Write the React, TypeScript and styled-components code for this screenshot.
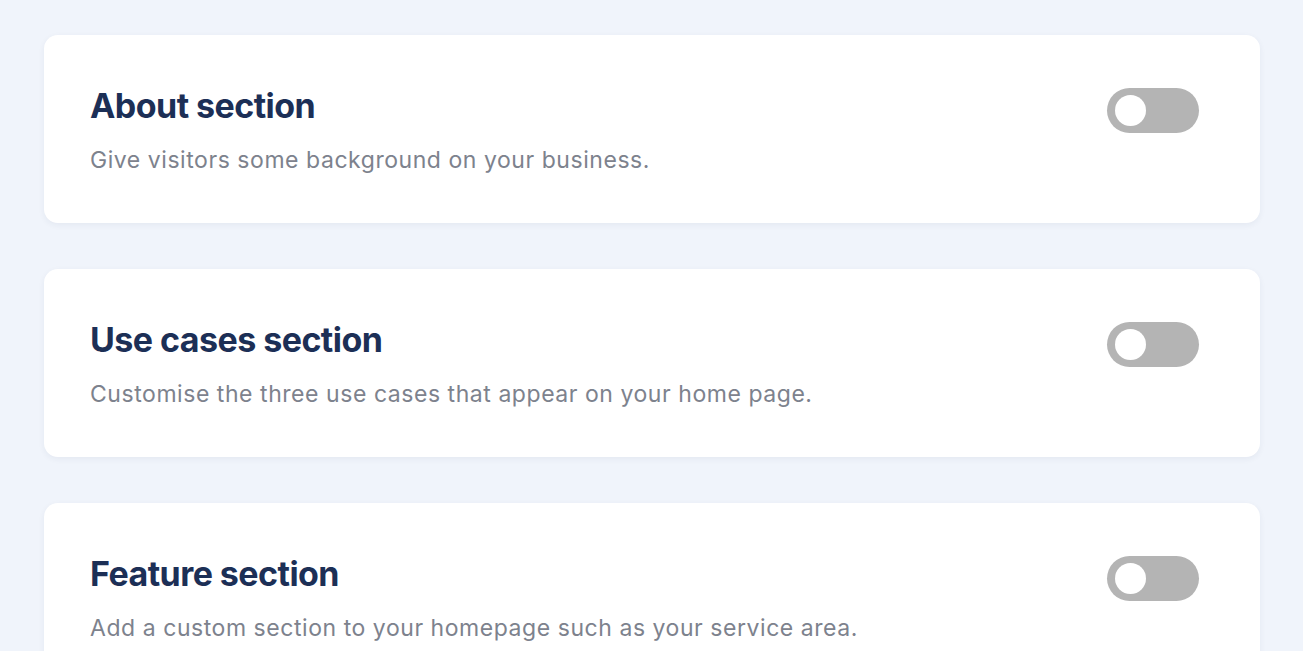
import styled, { createGlobalStyle } from 'styled-components'

const GlobalStyle = createGlobalStyle`
  html, body {
    margin: 0;
    padding: 0;
    background: #f0f4fb;
  }
  body {
    font-family: Inter, "Noto Sans", sans-serif;
    -webkit-font-smoothing: antialiased;
  }
`

const sections = [
  { title: 'About section', text: 'Give visitors some background on your business.' },
  { title: 'Use cases section', text: 'Customise the three use cases that appear on your home page.' },
  { title: 'Feature section', text: 'Add a custom section to your homepage such as your service area.' },
]

const App = () => {
  return (
    <>
      <GlobalStyle />
      <Page>
        {sections.map((s) => (
          <Card key={s.title}>
            <Info>
              <Title>{s.title}</Title>
              <Description>{s.text}</Description>
            </Info>
            <Toggle type="button" aria-pressed={false}>
              <Knob />
            </Toggle>
          </Card>
        ))}
      </Page>
    </>
  )
}

export default App

const Page = styled.div`
  display: flex;
  flex-direction: column;
  gap: 46px;
  padding: 35px 43px 0 44px;
`

const Card = styled.div`
  display: flex;
  align-items: flex-start;
  justify-content: space-between;
  box-sizing: border-box;
  height: 188px;
  padding: 53px 61px 0 46px;
  background: #ffffff;
  border-radius: 14px;
  box-shadow: 0 2px 6px rgba(30, 50, 90, 0.06);
  flex-shrink: 0;
`

const Info = styled.div`
  display: flex;
  flex-direction: column;
  gap: 22px;
`

const Title = styled.h2`
  margin: 0;
  font-size: 34px;
  line-height: 36px;
  font-weight: 700;
  letter-spacing: -0.55px;
  color: #1c2f56;
`

const Description = styled.p`
  margin: 0;
  font-size: 23px;
  line-height: 28px;
  font-weight: 400;
  letter-spacing: 0.55px;
  color: #7d828d;
`

const Toggle = styled.button`
  display: flex;
  align-items: center;
  width: 92px;
  height: 45px;
  padding: 0 0 0 8px;
  border: none;
  border-radius: 23px;
  background: #b4b4b4;
  cursor: pointer;
`

const Knob = styled.span`
  display: block;
  width: 31px;
  height: 31px;
  border-radius: 50%;
  background: #ffffff;
`
